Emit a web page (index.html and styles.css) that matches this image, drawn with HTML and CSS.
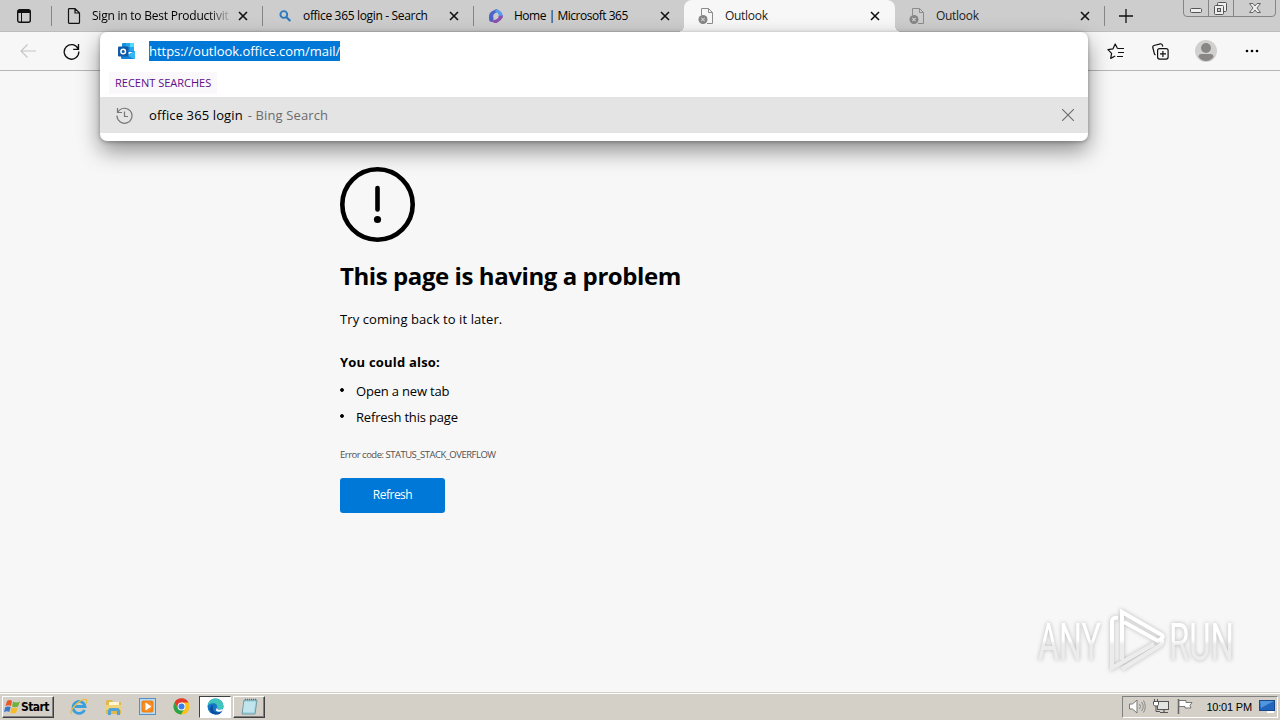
FILE: index.html
```html
<!DOCTYPE html>
<html lang="en">
<head>
	<meta charset="UTF-8">
	<title>Outlook</title>
	<link rel="stylesheet" href="styles.css">
</head>
<body>
	<!-- shared icons -->
	<svg class="defs" width="0" height="0">
		<symbol id="close" viewBox="0 0 10 10"><path d="M1 1l8 8M9 1L1 9" fill="none" stroke="currentColor" stroke-width="1.6"/></symbol>
		<symbol id="badpage" viewBox="0 0 16 16">
			<path d="M3.500 7V.5h7l4 4v11H9M10.500.5v4h4" fill="none" stroke="#8c8c8c"/>
			<circle cx="5" cy="11.500" r="4.500" fill="#858585"/>
			<path d="M3.300 9.800l3.400 3.400M6.700 9.800l-3.400 3.400" stroke="#ccc" stroke-width="1.200"/>
		</symbol>
	</svg>

	<div class="tabs">
		<div class="tab_menu">
			<svg width="14" height="14" viewBox="0 0 14 14"><rect x=".7" y=".7" width="12.600" height="12.600" rx="2" fill="none" stroke="#111" stroke-width="1.400"/><path d="M1 1h12v3H1z" fill="#111"/><path d="M4.500 4v9" stroke="#111"/></svg>
		</div>
		<div class="tab">
			<svg class="ico" width="16" height="16" viewBox="0 0 16 16"><path d="M2.500.6h6.500l4.500 4.500v9.300q0 1-1 1h-9q-1 0-1-1V1.600q0-1 1-1M9 .6V5h4.500" fill="none" stroke="#111" stroke-width="1.200"/></svg>
			<span class="name fade t1">Sign in to Best Productivit</span>
			<svg class="x" width="10" height="10"><use href="#close"/></svg>
		</div>
		<div class="tab">
			<svg class="ico" width="16" height="16" viewBox="0 0 16 16"><circle cx="6.800" cy="6.500" r="3.400" fill="none" stroke="#2a7abf" stroke-width="1.900"/><path d="M9.300 9l4 4" stroke="#2a7abf" stroke-width="2.200"/></svg>
			<span class="name t2">office 365 login - Search</span>
			<svg class="x" width="10" height="10"><use href="#close"/></svg>
		</div>
		<div class="tab last">
			<svg class="ico" width="16" height="16" viewBox="0 0 16 16">
				<path d="M8.500 1L3.500 3.500Q1 5 1 8v3q0 3 3 3l1.500-1V8q0-2 2-3l4-2z" fill="#4d63c8"/>
				<path d="M8 1.200l4.500 2Q15 5 15 8l-1 2-4-2.500V5L7 4.200z" fill="#5b9cea"/>
				<path d="M15 7.500q0 3-2.200 4.500L9.500 14.500q-2 1-4 0L3 13l5-1.500 2-1.500V8z" fill="#8b50b0"/>
				<path d="M8 5l2.500 1.500v3L8 11 5.500 9.500v-3z" fill="#cdcdcd"/>
			</svg>
			<span class="name t3">Home | Microsoft 365</span>
			<svg class="x" width="10" height="10"><use href="#close"/></svg>
		</div>
		<div class="tab active">
			<svg class="ico" width="16" height="16"><use href="#badpage"/></svg>
			<span class="name t4">Outlook</span>
			<svg class="x" width="10" height="10"><use href="#close"/></svg>
		</div>
		<div class="tab after">
			<svg class="ico" width="16" height="16"><use href="#badpage"/></svg>
			<span class="name t4">Outlook</span>
			<svg class="x" width="10" height="10"><use href="#close"/></svg>
		</div>
		<svg class="plus" width="14" height="14" viewBox="0 0 14 14"><path d="M7 0v14M0 7h14" stroke="#111" stroke-width="1.300"/></svg>
		<svg class="win_btns" width="94" height="17" viewBox="0 0 94 17">
			<path d="M.5 0v13q0 3.500 3.500 3.500h85q3.500 0 3.500-3.500V0M25.500 0v16M50.500 0v16" fill="none" stroke="#858585"/>
			<rect x="7.500" y="8.500" width="11" height="4" rx="1" fill="#eee" stroke="#555"/>
			<rect x="34.500" y="2.500" width="9" height="9" rx="1" fill="#eee" stroke="#555"/>
			<rect x="31.500" y="5.500" width="9" height="9" rx="1" fill="#eee" stroke="#555"/>
			<rect x="34.500" y="8.500" width="3" height="3" fill="#ccc" stroke="#555"/>
			<path d="M66.500 3.500h3.500l2 2.500 2-2.500h3.500L74 8l3.500 4.500H74L72 10l-2 2.500h-3.500L70 8z" fill="#eee" stroke="#666"/>
		</svg>
	</div>

	<div class="toolbar">
		<svg width="16" height="14" viewBox="0 0 16 14"><path d="M16 7H1M7.500.500L1 7l6.500 6.500" fill="none" stroke="#c4c4c4" stroke-width="1.100"/></svg>
		<svg width="17" height="17" viewBox="0 0 17 17"><path d="M15.300 6.200A7.300 7.300 0 1 0 15.800 8.500M15.500 1v5.300h-5.300" fill="none" stroke="#111" stroke-width="1.300"/></svg>
		<div class="tools">
			<svg width="18" height="17" viewBox="0 0 18 17"><path d="M10.500 5.500L8.200 1 6 5.800.9 6.600l3.700 3.700-.9 5.100 4.500-2.400M10.500 5.500H17M11 9.500h6M10 13.500h6" fill="none" stroke="#111" stroke-width="1.200" stroke-linejoin="round"/></svg>
			<svg width="17" height="17" viewBox="0 0 17 17"><rect x="5.600" y="5.600" width="10.500" height="10.500" rx="2" fill="none" stroke="#111" stroke-width="1.200"/><path d="M10.900 8v6M8 10.900h6M3.500 12l-1-.8L.8 4.500q-.3-1.500 1.200-2L8.300.8q1.500-.3 2 1.200l.5 1.500" fill="none" stroke="#111" stroke-width="1.200"/></svg>
			<svg width="22" height="22" viewBox="0 0 22 22"><circle cx="11" cy="11" r="11" fill="#d2d0ce"/><circle cx="11" cy="8" r="5" fill="#898785"/><path d="M3.500 17q0-3 3-3h9q3 0 3 3-3 4-7.500 4t-7.500-4" fill="#898785"/></svg>
			<svg class="dots" width="14" height="4" viewBox="0 0 14 4"><circle cx="2" cy="2" r="1.300"/><circle cx="7" cy="2" r="1.300"/><circle cx="12" cy="2" r="1.300"/></svg>
		</div>
	</div>

	<!-- address bar drop-down -->
	<div class="omnibox">
		<div class="url_row">
			<svg width="17" height="17" viewBox="0 0 17 17">
				<path d="M4 1q0-1 1-1h10q1 0 1 1v8H4z" fill="#1490df"/><path d="M8 0h4v4H8z" fill="#28a8ea"/><path d="M12 0h3q1 0 1 1v3h-4z" fill="#50d9ff"/><path d="M4 4h4v4H4z" fill="#0364b8"/><path d="M12 4h4v4h-4z" fill="#28a8ea"/>
				<path d="M3 8l7 4 7-4v7q0 1-1 1H4q-1 0-1-1z" fill="#1583d5"/><path d="M17 8v7q0 1-1 1l-7-4z" fill="#35b8f1"/>
				<rect y="3.500" width="10.500" height="10" rx="1" fill="#0f5aa8"/><circle cx="5.200" cy="8.500" r="2.300" fill="none" stroke="#fff" stroke-width="1.500"/>
			</svg>
			<span class="url">https://outlook.office.com/mail/</span>
		</div>
		<div class="recent"><span>RECENT SEARCHES</span></div>
		<div class="suggest">
			<svg width="17" height="17" viewBox="0 0 17 17"><path d="M2 5A7.500 7.500 0 1 1 1 8.500M1.500 1v4.500H6M8.500 4.500v5H12" fill="none" stroke="#767676" stroke-width="1.200"/></svg>
			<span class="query">office 365 login</span><span class="engine">- Bing Search</span>
			<svg class="remove" width="12" height="12" viewBox="0 0 12 12"><path d="M0 0l12 12M12 0L0 12" stroke="#6c6c6c" stroke-width="1.100"/></svg>
		</div>
	</div>

	<div class="page">
		<svg class="warn" width="75" height="75" viewBox="0 0 75 75"><circle cx="37.500" cy="37.500" r="35.200" fill="none" stroke="#000" stroke-width="4.600"/><path d="M37.500 21v21.500" stroke="#000" stroke-width="4.600" stroke-linecap="round"/><circle cx="37.500" cy="52.500" r="3.600"/></svg>
		<h1>This page is having a problem</h1>
		<p class="later">Try coming back to it later.</p>
		<h2>You could also:</h2>
		<ul>
			<li>Open a new tab</li>
			<li>Refresh this page</li>
		</ul>
		<p class="code">Error code: STATUS_STACK_OVERFLOW</p>
		<button class="refresh">Refresh</button>
		<svg class="watermark" width="210" height="76" viewBox="0 0 210 76">
			<linearGradient id="fade" gradientUnits="userSpaceOnUse" x1="0" y1="0" x2="0" y2="76">
				<stop offset=".5" stop-color="#fff"/>
				<stop offset=".56" stop-color="#ececec"/>
			</linearGradient>
			<g class="mark">
				<text x="8" y="58" textLength="63" lengthAdjust="spacingAndGlyphs">ANY</text>
				<text x="139" y="58" textLength="65" lengthAdjust="spacingAndGlyphs">RUN</text>
				<path d="M88 16q-6-1-6 4v46l7-4 35-20M92 58V10l40 23q2 2-1 4l-3 2-34-19M92 67l37-23q5-3 2-7" />
			</g>
		</svg>
	</div>

	<div class="taskbar">
		<div class="start">
			<svg width="17" height="16" viewBox="0 0 17 16"><path d="M3 2q3-2 5 0L7 7Q4.500 5.500 1.500 7z" fill="#e8582a"/><path d="M9 2.500q3 2 7 0L14 7.500q-3 1.500-6 0z" fill="#6fb13a"/><path d="M1.200 8.200q3-1.500 5.500 0L5.200 13Q3 11.500 0 13z" fill="#3a78cc"/><path d="M7.700 8.500q3 1.500 6 0L12.200 13.500q-3 2-6 0z" fill="#f4bd27"/></svg>
			<span>Start</span>
		</div>
		<div class="app">
			<svg width="18" height="18" viewBox="0 0 18 18"><path d="M14.500 12A6 6 0 1 1 15 8.500H5" fill="none" stroke="#3a9fdc" stroke-width="2.800"/><path d="M2 16Q-1 14 5 7.500 12 .5 16 1.500q1.500.8 0 4" fill="none" stroke="#e8bd3c" stroke-width="1.300"/></svg>
		</div>
		<div class="app">
			<svg width="17" height="18" viewBox="0 0 17 18"><path d="M1 3l1-1h5l1 2h8v12H1z" fill="#dfb94f"/><path d="M4 4h10v5H4z" fill="#fff6cf"/><path d="M1 7h15v5H1z" fill="#efd27a"/><path d="M3 17v-4q0-3 3-3h6q3 0 3 3v4h-3v-4H6v4z" fill="#4fa3d6"/></svg>
		</div>
		<div class="app">
			<svg width="17" height="17" viewBox="0 0 17 17"><rect x=".5" y=".5" width="16" height="16" fill="#b9dbf2" stroke="#5590c5"/><rect x="2.500" y="2.500" width="12" height="12" rx="2" fill="#f08218"/><circle cx="8.500" cy="8.500" r="5" fill="#f58f25"/><path d="M6.500 4.500v8l6-4z" fill="#fff"/></svg>
		</div>
		<div class="app">
			<svg width="17" height="17" viewBox="0 0 17 17"><circle cx="8.500" cy="8.500" r="8" fill="#fbc116"/><path d="M1.500 4.500A8 8 0 0 1 15.500 4.500H8.500L5 10.500z" fill="#e33b2e"/><path d="M1.500 4.500A8 8 0 0 0 8 16.500l3.500-6H5z" fill="#2ba24c"/><circle cx="8.500" cy="8.500" r="3.900" fill="#fff"/><circle cx="8.500" cy="8.500" r="3" fill="#3d7de8"/></svg>
		</div>
		<div class="app pressed">
			<svg width="17" height="17" viewBox="0 0 17 17"><circle cx="8.500" cy="8.500" r="8" fill="#1676c8"/><path d="M.6 7.500A8 8 0 0 1 16.500 8q0 3.500-3.500 3.500-2.500 0-3-1 1-4-2.500-5.200Q3.500 4.500.6 7.500" fill="#3fc5bb"/><path d="M5.700 9q0 5 4.800 5.500 3 0 5-1.600Q13 17 8.500 16.500 2 15.500 3 10q1-3 4-3.500Q5.700 7.500 5.700 9" fill="#0d4f9e"/><path d="M9.500 10q.5 2 4 1.600l2.700-.5-.8 1.700q-4 2-6.500-.3z" fill="#fff"/></svg>
		</div>
		<div class="app raised">
			<svg width="17" height="17" viewBox="0 0 17 17"><path d="M3 2h13l-2 14H1z" fill="#a6d8e2" stroke="#7399a5"/><path d="M3 5h11M2.800 7h11M2.500 9h11M2.300 11h11M2 13h11" stroke="#e8fafc" stroke-width=".8"/><path d="M4 1.500h11" stroke="#667" stroke-width="1.500" stroke-dasharray="1 1"/></svg>
		</div>
		<div class="tray">
			<svg width="17" height="15" viewBox="0 0 17 15"><path d="M.5 5h3L8 1v13l-4.500-4h-3z" fill="#fff" stroke="#777"/><path d="M10.500 5q2 2.500 0 5M12.500 3q3.500 4.500 0 9M14.500 1.500q3.500 6 0 12" fill="none" stroke="#888"/></svg>
			<svg width="17" height="15" viewBox="0 0 17 15"><rect x="4.500" y="2.500" width="11" height="8" fill="#e4e4e4" stroke="#555"/><path d="M7 13.500h8M11 11v2" stroke="#555" stroke-width="1.200"/><path d="M.5 2.500h5v3l-1 1.500h-3l-1-1.500z" fill="#fff" stroke="#555"/><path d="M1.500 0v2M4.500 0v2M3 7v5.500h4" fill="none" stroke="#555"/></svg>
			<svg width="17" height="15" viewBox="0 0 17 15"><path d="M1.500 0v15" stroke="#666" stroke-width="1.500"/><path d="M2 1.500h7v2h6l-2 3 1 2.500H8V7.500H2z" fill="#fff" stroke="#777"/></svg>
			<span class="clock">10:01 PM</span>
			<svg width="16" height="13" viewBox="0 0 16 13"><rect x=".5" y=".5" width="15" height="10" fill="#2265bd" stroke="#17498c"/><path d="M1 1h14L2 8z" fill="#4f96dc"/><path d="M8 12h7" stroke="#fff" stroke-width="2"/></svg>
		</div>
	</div>
</body>
</html>
```
FILE: styles.css
```css
* {
	margin: 0;
	padding: 0;
	box-sizing: border-box;
}

body {
	width: 1280px;
	height: 720px;
	display: flex;
	flex-direction: column;
	position: relative;
	overflow: hidden;
	background-color: #f7f7f7;
	color: #000;
	font-family: 'Open Sans', 'Noto Sans', sans-serif;
	font-size: 12px;
}

svg {
	display: block;
	flex: none;
}

.defs {
	position: absolute;
}

/* tab strip */
.tabs {
	height: 32px;
	flex: none;
	display: flex;
	align-items: center;
	background-color: #cdcdcd;
	box-shadow: inset 0 -1px 0 #bdbdbd;
}

.tab_menu {
	width: 52px;
	height: 20px;
	padding: 3px 0 0 17px;
	border-right: 1px solid #858585;
}

.tab {
	width: 211px;
	height: 32px;
	padding: 0 15px 0 14px;
	display: flex;
	align-items: center;
	background: linear-gradient(#858585, #858585) right 6px / 1px 20px no-repeat;
}

.tab.last {
	width: 210px;
	padding-right: 14px;
	background: none;
}

.tab.active {
	background: #f7f7f7;
	border-radius: 8px 8px 0 0;
	position: relative;
	z-index: 1;
}

/* curved feet of the active tab */
.tab.active:before,
.tab.active:after {
	content: '';
	width: 6px;
	height: 6px;
	position: absolute;
	left: -6px;
	bottom: 0;
	background: radial-gradient(circle at 0 0, transparent 6px, #f7f7f7 6px);
}

.tab.active:after {
	left: auto;
	right: -6px;
	background: radial-gradient(circle at 100% 0, transparent 6px, #f7f7f7 6px);
}

.tab.after {
	width: 210px;
}

.name {
	width: 140px;
	margin-left: 11px;
	line-height: 16px;
	white-space: nowrap;
}

.t1 {
	margin-left: 10px;
	letter-spacing: -0.23px;
}

.t2 {
	margin-left: 10px;
	letter-spacing: -0.33px;
}

.t3 {
	margin-left: 10px;
	letter-spacing: -0.48px;
}

.t4 {
	letter-spacing: -0.3px;
	color: #222;
}

.fade {
	-webkit-mask-image: linear-gradient(to right, #000 116px, transparent 141px);
	mask-image: linear-gradient(to right, #000 116px, transparent 141px);
}

.x {
	margin-left: auto;
	color: #111;
}

.plus {
	margin-left: 14px;
}

.win_btns {
	margin-left: auto;
	margin-right: 3px;
	align-self: flex-start;
}

/* toolbar */
.toolbar {
	height: 39px;
	flex: none;
	padding: 0 21px 0 20px;
	display: flex;
	align-items: center;
	gap: 27px;
	background-color: #f7f7f7;
	border-bottom: 1px solid #b5b5b5;
}

.tools {
	margin-left: auto;
	display: flex;
	align-items: center;
	gap: 26px;
}

.tools svg:first-child {
	margin-right: 1px;
}

.dots {
	margin-left: 2px;
}

/* suggestions lie over toolbar and page */
.omnibox {
	width: 988px;
	height: 109px;
	position: absolute;
	left: 100px;
	top: 32px;
	z-index: 2;
	border-radius: 7px;
	background-color: #fff;
	box-shadow: 0 10px 22px rgba(0, 0, 0, 0.42), 0 1px 4px rgba(0, 0, 0, 0.3);
}

.url_row {
	height: 38px;
	padding-left: 18px;
	display: flex;
	align-items: center;
	gap: 14px;
}

.url {
	height: 20px;
	line-height: 21px;
	background-color: #0078d7;
	color: #fff;
	font-size: 13px;
	letter-spacing: -0.03px;
}

.recent {
	height: 27px;
	padding: 2px 0 0 9px;
}

.recent span {
	display: block;
	width: 108px;
	height: 22px;
	padding-left: 6px;
	line-height: 22px;
	background-color: #faf8fa;
	color: #5c0f8b;
	font-size: 11px;
	white-space: nowrap;
}

.suggest {
	height: 36px;
	padding: 0 14px 0 16px;
	display: flex;
	align-items: center;
	background-color: #e4e4e4;
	font-size: 13px;
	line-height: 20px;
}

.query {
	margin-left: 16px;
	letter-spacing: 0.12px;
}

.engine {
	margin-left: 5px;
	color: #6c6c6c;
	letter-spacing: 0.12px;
}

.remove {
	margin-left: auto;
}

/* error page */
.page {
	height: 621px;
	flex: none;
	padding: 96px 0 0 340px;
	position: relative;
}

h1 {
	margin-top: 16px;
	font-size: 24px;
	line-height: 36px;
	letter-spacing: -0.42px;
}

.later {
	margin-top: 15px;
	font-size: 13px;
	line-height: 20px;
	letter-spacing: 0.08px;
}

h2 {
	margin-top: 23px;
	font-size: 13px;
	line-height: 20px;
	letter-spacing: 0.2px;
}

ul {
	margin-top: 6px;
	list-style: none;
}

li {
	height: 26px;
	padding-left: 16px;
	font-size: 13px;
	line-height: 26px;
	letter-spacing: -0.18px;
	background: radial-gradient(circle at 2px 12px, #000 1.5px, transparent 2.2px);
}

.code {
	margin-top: 16px;
	color: #505050;
	font-size: 9.5px;
	line-height: 18px;
	letter-spacing: -0.5px;
}

.refresh {
	display: block;
	width: 105px;
	height: 35px;
	margin-top: 14px;
	padding-bottom: 2px;
	border: none;
	border-radius: 3px;
	background-color: #0078d7;
	color: #fff;
	font-family: inherit;
	font-size: 12px;
	letter-spacing: -0.5px;
}

.watermark {
	overflow: visible;
	position: absolute;
	right: 40px;
	bottom: 14px;
}

.mark {
	fill: url(#fade);
	font-family: Roboto, sans-serif;
	font-size: 52px;
	filter: drop-shadow(0 0 2px rgba(0, 0, 0, 0.25));
}

.mark path {
	fill: none;
	stroke: url(#fade);
	stroke-width: 4;
}

/* taskbar */
.taskbar {
	height: 28px;
	flex: none;
	padding: 0 2px;
	display: flex;
	align-items: center;
	background-color: #d4d0c8;
	border-top: 1px solid #d4d0c8;
	box-shadow: inset 0 1px 0 #fff;
}

.start {
	width: 52px;
	height: 22px;
	margin-right: 8px;
	padding-left: 1px;
	display: flex;
	align-items: center;
	border: 1px solid;
	border-color: #fff #404040 #404040 #fff;
	box-shadow: inset -1px -1px 0 #808080;
	font-family: 'DejaVu Sans Condensed', 'DejaVu Sans', sans-serif;
	font-size: 12px;
	font-weight: bold;
	letter-spacing: -0.6px;
}

.app {
	width: 34px;
	height: 22px;
	display: flex;
	align-items: center;
	justify-content: center;
}

.pressed {
	width: 32px;
	margin-left: 1px;
	background-color: #fff;
	border: 1px solid;
	border-color: #404040 #fff #fff #404040;
}

.raised {
	width: 32px;
	margin-left: 2px;
	border: 1px solid;
	border-color: #fff #404040 #404040 #fff;
	box-shadow: inset -1px -1px 0 #808080;
}

.tray {
	width: 156px;
	height: 22px;
	margin-left: auto;
	padding: 0 2px 0 6px;
	display: flex;
	align-items: center;
	justify-content: space-between;
	border: 1px solid;
	border-color: #808080 #fff #fff #808080;
}

.clock {
	margin-left: 5px;
	font-family: 'Liberation Sans', sans-serif;
	font-size: 11px;
	letter-spacing: -0.2px;
}
```
